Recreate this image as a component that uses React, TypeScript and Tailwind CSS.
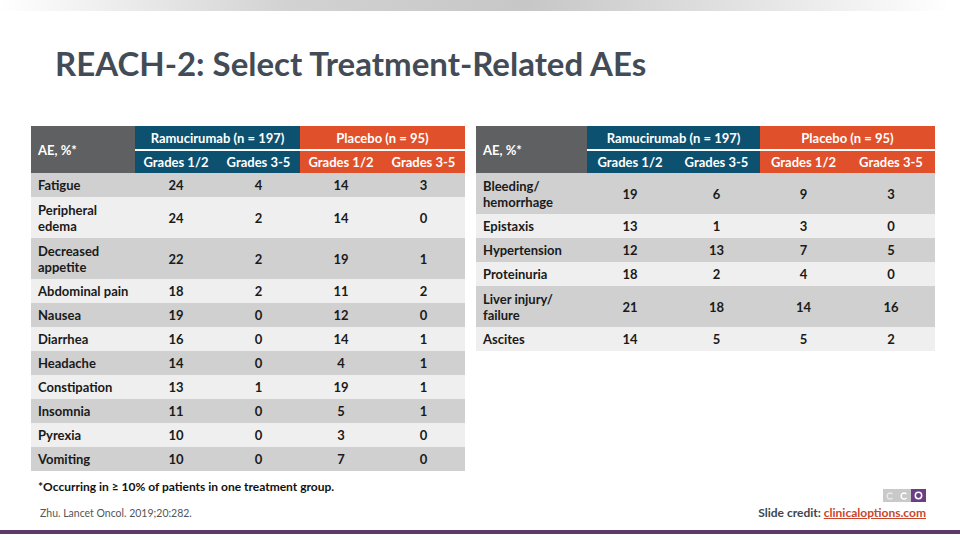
import type { ReactNode } from 'react';

type Row = { label: ReactNode; vals: [number, number, number, number]; tall?: boolean };

const leftRows: Row[] = [
  { label: 'Fatigue', vals: [24, 4, 14, 3] },
  { label: <>Peripheral<br />edema</>, vals: [24, 2, 14, 0], tall: true },
  { label: <>Decreased<br />appetite</>, vals: [22, 2, 19, 1], tall: true },
  { label: 'Abdominal pain', vals: [18, 2, 11, 2] },
  { label: 'Nausea', vals: [19, 0, 12, 0] },
  { label: 'Diarrhea', vals: [16, 0, 14, 1] },
  { label: 'Headache', vals: [14, 0, 4, 1] },
  { label: 'Constipation', vals: [13, 1, 19, 1] },
  { label: 'Insomnia', vals: [11, 0, 5, 1] },
  { label: 'Pyrexia', vals: [10, 0, 3, 0] },
  { label: 'Vomiting', vals: [10, 0, 7, 0] },
];

const rightRows: Row[] = [
  { label: <>Bleeding/<br />hemorrhage</>, vals: [19, 6, 9, 3], tall: true },
  { label: 'Epistaxis', vals: [13, 1, 3, 0] },
  { label: 'Hypertension', vals: [12, 13, 7, 5] },
  { label: 'Proteinuria', vals: [18, 2, 4, 0] },
  { label: <>Liver injury/<br />failure</>, vals: [21, 18, 14, 16], tall: true },
  { label: 'Ascites', vals: [14, 5, 5, 2] },
];

function AeTable({ rows, cols }: { rows: Row[]; cols: string[] }) {
  return (
    <table className="table-fixed border-collapse text-[13px] font-bold leading-[16px]">
      <colgroup>
        {cols.map((w, i) => (
          <col key={i} className={w} />
        ))}
      </colgroup>
      <thead className="text-white">
        <tr className="h-[24px]">
          <th rowSpan={2} className="bg-[#5f6062] text-left align-middle pl-[7px] font-bold">
            AE, %*
          </th>
          <th colSpan={2} className="bg-[#0d5170] border-b-2 border-white font-bold">
            Ramucirumab (n = 197)
          </th>
          <th colSpan={2} className="bg-[#e0502a] border-b-2 border-white font-bold">
            Placebo (n = 95)
          </th>
        </tr>
        <tr className="h-[23px]">
          <th className="bg-[#0d5170] font-bold">Grades 1/2</th>
          <th className="bg-[#0d5170] font-bold">Grades 3-5</th>
          <th className="bg-[#e0502a] font-bold">Grades 1/2</th>
          <th className="bg-[#e0502a] font-bold">Grades 3-5</th>
        </tr>
      </thead>
      <tbody className="text-[#1a1a1a]">
        {rows.map((r, i) => (
          <tr key={i} className={`${r.tall ? 'h-[41px]' : 'h-[24px]'} ${i % 2 === 0 ? 'bg-[#d0d0d0]' : 'bg-[#efefef]'}`}>
            <td className="pl-[7px] align-middle">{r.label}</td>
            {r.vals.map((v, j) => (
              <td key={j} className="text-center align-middle">
                {v}
              </td>
            ))}
          </tr>
        ))}
      </tbody>
    </table>
  );
}

function CcoLogo() {
  return (
    <div className="flex h-[13px]">
      <div className="w-[14px] bg-[#c9c9c9] flex items-center justify-center">
        <svg width="8" height="8" viewBox="0 0 8 8">
          <path d="M6.5 2.2A3 3 0 1 0 6.5 5.8" fill="none" stroke="#eaeaea" strokeWidth="1.4" />
        </svg>
      </div>
      <div className="w-[14px] bg-[#c9c9c9] flex items-center justify-center">
        <svg width="8" height="8" viewBox="0 0 8 8">
          <path d="M6.5 2.2A3 3 0 1 0 6.5 5.8" fill="none" stroke="#ffffff" strokeWidth="1.4" />
        </svg>
      </div>
      <div className="w-[15px] bg-[#6a3d86] flex items-center justify-center">
        <svg width="9" height="9" viewBox="0 0 9 9">
          <circle cx="4.5" cy="4.5" r="3.2" fill="none" stroke="#ffffff" strokeWidth="1.5" />
        </svg>
      </div>
    </div>
  );
}

export default function App() {
  return (
    <div className="w-[960px] h-[540px] bg-white flex flex-col overflow-hidden font-['Lato',sans-serif]">
      {/* top band */}
      <div className="h-[11px] bg-[linear-gradient(to_right,#ffffff_0%,#f3f3f3_8%,#d2d2d2_30%,#c7c7c7_55%,#e6e6e6_80%,#ffffff_99%)]" />

      <h1 className="mt-[32px] ml-[55px] text-[33px] leading-[40px] font-bold text-[#434c56]">
        REACH-2: Select Treatment-Related AEs
      </h1>

      {/* tables */}
      <div className="mt-[43px] ml-[31px] flex items-start gap-[11px]">
        <AeTable rows={leftRows} cols={['w-[104px]', 'w-[82px]', 'w-[83px]', 'w-[82px]', 'w-[83px]']} />
        <AeTable rows={rightRows} cols={['w-[111px]', 'w-[86px]', 'w-[87px]', 'w-[87px]', 'w-[88px]']} />
      </div>

      {/* footer */}
      <div className="flex-1 flex items-end justify-between px-[34px] pb-[8px]">
        <div className="flex flex-col">
          <p className="ml-[4px] text-[12px] font-bold text-[#111]">
            *Occurring in ≥ 10% of patients in one treatment group.
          </p>
          <p className="mt-[10px] ml-[6px] text-[10.5px] text-[#555]">Zhu. Lancet Oncol. 2019;20:282.</p>
        </div>
        <div className="flex flex-col items-end">
          <CcoLogo />
          <p className="mt-[2px] text-[12px] font-bold text-[#3e4650]">
            Slide credit:{' '}
            <span className="text-[#c8462a] underline">clinicaloptions.com</span>
          </p>
        </div>
      </div>
      <div className="h-[4px] bg-[#5d3a6c] mb-[6px]" />
    </div>
  );
}
